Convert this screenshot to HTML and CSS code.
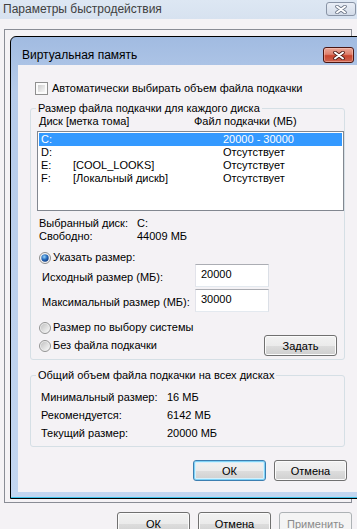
FILE: index.html
```html
<!DOCTYPE html>
<html lang="ru">
<head>
<meta charset="utf-8">
<title>Виртуальная память</title>
<link rel="stylesheet" href="styles.css">
</head>
<body>
<div class="outer">
  <div class="outer-title">
    <span class="outer-title-text">Параметры быстродействия</span>
    <span class="close close-inactive">
      <svg width="12" height="9" viewBox="0 0 12 9"><path d="M2 1.5L10 7.5M10 1.5L2 7.5" stroke="#6c7688" stroke-width="3.6" stroke-linecap="round"/><path d="M2 1.5L10 7.5M10 1.5L2 7.5" stroke="#fff" stroke-width="2" stroke-linecap="round"/></svg>
    </span>
  </div>
  <div class="outer-body">
    <div class="tabpanel"></div>
    <div class="outer-buttons">
      <button class="btn btn-tall">ОК</button>
      <button class="btn btn-tall">Отмена</button>
      <button class="btn btn-tall disabled">Применить</button>
    </div>
  </div>

  <div class="dialog">
    <div class="dlg-title">
      <span class="dlg-title-text">Виртуальная память</span>
      <span class="close close-active">
        <svg width="12" height="9" viewBox="0 0 12 9"><path d="M2 1.5L10 7.5M10 1.5L2 7.5" stroke="#4b1a14" stroke-width="3.6" stroke-linecap="round"/><path d="M2 1.5L10 7.5M10 1.5L2 7.5" stroke="#fff" stroke-width="2" stroke-linecap="round"/></svg>
      </span>
    </div>
    <div class="client">
      <div class="check-row"><span class="checkbox"></span><span>Автоматически выбирать объем файла подкачки</span></div>

      <fieldset class="group group1">
        <legend>Размер файла подкачки для каждого диска</legend>
        <div class="list-head"><span class="col-disk">Диск [метка тома]</span><span>Файл подкачки (МБ)</span></div>
        <div class="listbox">
          <div class="lrow sel"><span class="c1">C:</span><span class="c2"></span><span>20000 - 30000</span></div>
          <div class="lrow"><span class="c1">D:</span><span class="c2"></span><span>Отсутствует</span></div>
          <div class="lrow"><span class="c1">E:</span><span class="c2">[COOL_LOOKS]</span><span>Отсутствует</span></div>
          <div class="lrow"><span class="c1">F:</span><span class="c2">[Локальный дискb]</span><span>Отсутствует</span></div>
        </div>
        <div class="info info-first"><span class="il">Выбранный диск:</span><span>C:</span></div>
        <div class="info"><span class="il">Свободно:</span><span>44009 МБ</span></div>

        <div class="radio-row radio-first">
          <svg class="rb" width="12" height="12" viewBox="0 0 12 12"><defs><radialGradient id="rg-on" cx="40%" cy="35%" r="65%"><stop offset="0" stop-color="#9ad6f8"/><stop offset="0.55" stop-color="#2a6fc0"/><stop offset="1" stop-color="#123f85"/></radialGradient></defs><circle cx="6" cy="6" r="5.5" fill="#f3f3f3" stroke="#8d8d8d"/><circle cx="6" cy="6" r="3.7" fill="url(#rg-on)"/></svg>
          <span>Указать размер:</span>
        </div>
        <div class="field-row"><span class="fl">Исходный размер (МБ):</span><span class="textbox">20000</span></div>
        <div class="field-row field-second"><span class="fl">Максимальный размер (МБ):</span><span class="textbox">30000</span></div>

        <div class="radio-row radio-second">
          <svg class="rb" width="12" height="12" viewBox="0 0 12 12"><defs><linearGradient id="rg-off1" x1="0" y1="0" x2="1" y2="1"><stop offset="0" stop-color="#c2c2c2"/><stop offset="1" stop-color="#f7f7f7"/></linearGradient></defs><circle cx="6" cy="6" r="5.5" fill="#eeeeee" stroke="#939393"/><circle cx="6" cy="6" r="4.2" fill="url(#rg-off1)"/></svg>
          <span>Размер по выбору системы</span>
        </div>
        <div class="last-row">
          <div class="radio-row">
            <svg class="rb" width="12" height="12" viewBox="0 0 12 12"><defs><linearGradient id="rg-off2" x1="0" y1="0" x2="1" y2="1"><stop offset="0" stop-color="#c2c2c2"/><stop offset="1" stop-color="#f7f7f7"/></linearGradient></defs><circle cx="6" cy="6" r="5.5" fill="#eeeeee" stroke="#939393"/><circle cx="6" cy="6" r="4.2" fill="url(#rg-off2)"/></svg>
            <span>Без файла подкачки</span>
          </div>
          <button class="btn btn-set">Задать</button>
        </div>
      </fieldset>

      <fieldset class="group group2">
        <legend>Общий объем файла подкачки на всех дисках</legend>
        <div class="sum sum-first"><span class="sl">Минимальный размер:</span><span>16 МБ</span></div>
        <div class="sum"><span class="sl">Рекомендуется:</span><span>6142 МБ</span></div>
        <div class="sum"><span class="sl">Текущий размер:</span><span>20000 МБ</span></div>
      </fieldset>

      <div class="dlg-buttons">
        <button class="btn default">ОК</button>
        <button class="btn">Отмена</button>
      </div>
    </div>
  </div>
</div>
</body>
</html>
```

FILE: styles.css
```css
html, body {
  margin: 0;
  padding: 0;
}
body {
  width: 357px;
  height: 529px;
  overflow: hidden;
  background: #f4f2f5;
  font-family: "Liberation Sans", Arial, sans-serif;
  font-size: 11px;
  color: #000;
}

.outer {
  position: relative;
  width: 357px;
  height: 529px;
  overflow: hidden;
}

.outer-title {
  height: 19px;
  box-sizing: border-box;
  padding: 0 1px 0 3px;
  display: flex;
  justify-content: space-between;
  align-items: flex-start;
  background: linear-gradient(#dde7f3, #d7e2f0);
}
.outer-title-text {
  font-size: 12px;
  line-height: 19px;
  color: #404040;
}

.close {
  display: flex;
  align-items: center;
  justify-content: center;
  box-sizing: border-box;
  border-radius: 3px;
}
.close-inactive {
  width: 30px;
  height: 14px;
  margin-top: 2px;
  border: 1px solid #8994a6;
  background: linear-gradient(#e9eef6, #d2dbe8);
}
.close-active {
  width: 31px;
  height: 16px;
  border: 1px solid #4a1612;
  background: linear-gradient(#eaa898 0%, #df806d 45%, #c9462f 55%, #cc6450 100%);
  box-shadow: inset 0 0 0 1px rgba(255, 210, 200, 0.45);
}

.outer-body {
  padding-top: 10px;
}
.tabpanel {
  height: 474px;
  margin: 0 5px 0 4px;
  box-sizing: border-box;
  border: 1px solid #898c95;
}
.outer-buttons {
  margin-top: 9px;
  padding-right: 5px;
  display: flex;
  justify-content: flex-end;
  gap: 8px;
}

/* Buttons */
.btn {
  width: 73px;
  height: 21px;
  box-sizing: border-box;
  padding: 0;
  font-family: inherit;
  font-size: 11px;
  color: #000;
  border: 1px solid #707070;
  border-radius: 3px;
  background: linear-gradient(#f2f2f2 0%, #ebebeb 50%, #dddddd 51%, #cfcfcf 100%);
  box-shadow: inset 0 0 0 1px #fbfbfb;
}
.btn-tall {
  height: 23px;
}
.btn.default {
  border-color: #3c7fb1;
  box-shadow: inset 0 0 0 1px #7fd2f6, inset 0 0 0 2px #d4f0fc;
}
.btn.disabled {
  border-color: #adb2b5;
  background: #f4f4f4;
  box-shadow: none;
  color: #8a8a8a;
}

/* Dialog window */
.dialog {
  position: absolute;
  left: 10px;
  top: 36px;
  width: 355px;
  height: 463px;
  box-sizing: border-box;
  border: 1px solid #000;
  border-radius: 6px 6px 0 0;
  padding: 0 7px 6px;
  background: linear-gradient(#a1bbe1 0%, #b6cbea 12%, #c3d6f0 100%);
  box-shadow: inset 0 -1px 0 #3cc2ea;
  display: flex;
  flex-direction: column;
}
.dlg-title {
  height: 28px;
  box-sizing: border-box;
  padding: 0 3px 2px 4px;
  display: flex;
  justify-content: space-between;
  align-items: flex-end;
}
.dlg-title-text {
  font-size: 12px;
  line-height: 15px;
}
.client {
  flex: 1;
  background: #f4f2f5;
  padding: 0 10px 0 12px;
}

.check-row {
  height: 13px;
  margin: 17px 0 0 5px;
  display: flex;
  align-items: center;
  gap: 4px;
  line-height: 13px;
}
.checkbox {
  width: 13px;
  height: 13px;
  box-sizing: border-box;
  border: 1px solid #8f8f8f;
  padding: 2px;
  background: linear-gradient(135deg, #cdcdcd, #f7f7f7) content-box, #fbfbfb;
}

/* Group boxes */
.group {
  margin: 0 2px 0 0;
  padding: 0 6px 3px;
  border: 1px solid #d5dfe5;
  border-radius: 3px;
  min-width: 0;
}
.group legend {
  padding: 0 2px;
  margin-left: -1px;
  line-height: 13px;
}
.group1 {
  margin-top: 7px;
}
.group2 {
  margin-top: 9px;
  padding-bottom: 4px;
}

.list-head {
  height: 13px;
  line-height: 13px;
  padding-left: 2px;
  display: flex;
}
.col-disk {
  width: 155px;
}
.listbox {
  margin: 3px -6px 0 0;
  height: 80px;
  box-sizing: border-box;
  border: 1px solid #828790;
  background: #fff;
  padding: 1px;
}
.lrow {
  height: 13px;
  line-height: 13px;
  padding-left: 2px;
  display: flex;
}
.lrow.sel {
  background: #3399ff;
  color: #fff;
}
.c1 {
  width: 32px;
}
.c2 {
  width: 150px;
}

.info {
  height: 13px;
  line-height: 13px;
  padding-left: 2px;
  display: flex;
}
.info-first {
  margin-top: 6px;
}
.il {
  width: 98px;
}

.radio-row {
  height: 13px;
  line-height: 13px;
  padding-left: 2px;
  display: flex;
  align-items: center;
  gap: 2px;
}
.radio-first {
  margin-top: 8px;
}
.radio-second {
  margin-top: 9px;
}
.rb {
  flex: none;
}

.field-row {
  height: 23px;
  padding-left: 5px;
  display: flex;
  align-items: center;
}
.field-second {
  margin-top: 2px;
}
.fl {
  width: 153px;
  padding-top: 2px;
}
.textbox {
  width: 74px;
  height: 23px;
  box-sizing: border-box;
  border: 1px solid;
  border-color: #abadb3 #dbdfe6 #e3e9ef #e2e3ea;
  background: #fff;
  padding-left: 5px;
  line-height: 19px;
}

.last-row {
  height: 21px;
  margin-top: 1px;
  display: flex;
  align-items: center;
  justify-content: space-between;
}
.btn-set {
  margin-right: 1px;
}

.sum {
  height: 18px;
  padding-left: 4px;
  display: flex;
  align-items: center;
}
.sum-first {
  margin-top: 6px;
}
.sl {
  width: 126px;
}

.dlg-buttons {
  margin-top: 13px;
  display: flex;
  justify-content: flex-end;
  gap: 8px;
}
```
